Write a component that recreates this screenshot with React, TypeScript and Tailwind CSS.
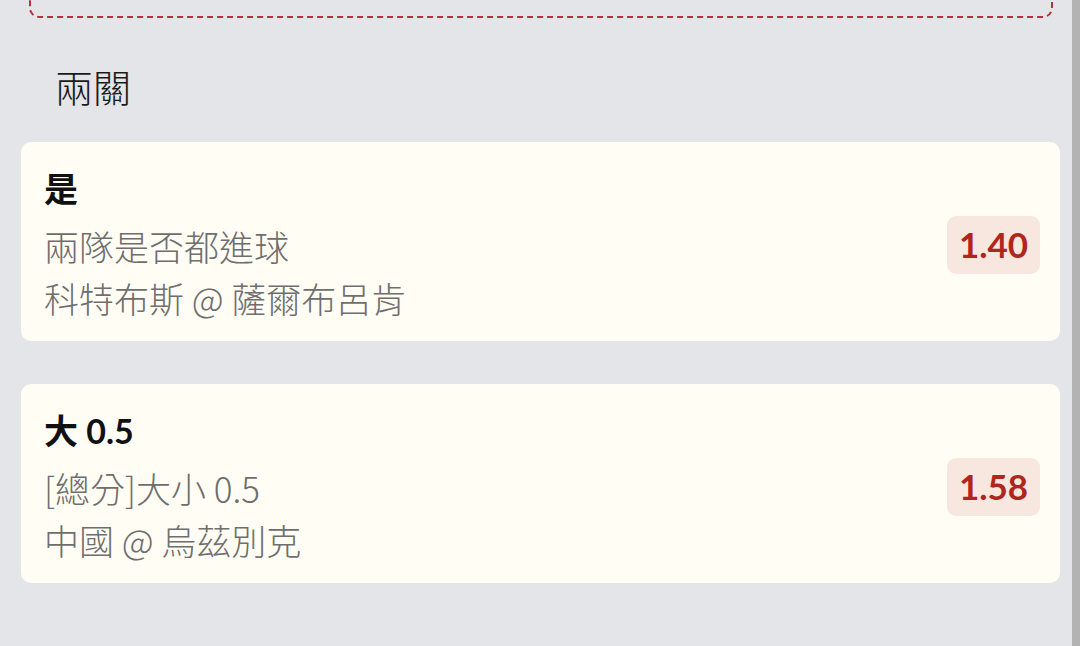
const FONT = '"Lato", "Noto Sans CJK TC", "Noto Sans", sans-serif'
const SUB_FONT = '"Noto Sans CJK TC", "Noto Sans", sans-serif'

type Leg = {
  pick: string
  market: string
  match: string
  odds: string
}

const legs: Leg[] = [
  { pick: '是', market: '兩隊是否都進球', match: '科特布斯 @ 薩爾布呂肯', odds: '1.40' },
  { pick: '大 0.5', market: '[總分]大小 0.5', match: '中國 @ 烏茲別克', odds: '1.58' },
]

function LegCard({ leg }: { leg: Leg }) {
  return (
    <div className="flex h-[199px] items-center rounded-[10px] bg-[#fffdf4] pl-[23px] pr-[20px]">
      <div className="flex flex-1 flex-col pt-[3px]">
        <p className="text-[34px] font-bold leading-[52px] text-[#111111]">{leg.pick}</p>
        <div className="mt-[5px] text-[35px] font-light leading-[52px] text-[#6e6e6e]" style={{ fontFamily: SUB_FONT }}>
          <p>{leg.market}</p>
          <p>{leg.match}</p>
        </div>
      </div>
      <div className="mt-[6px] flex h-[58px] w-[93px] items-center justify-center rounded-[9px] bg-[#f8e7df] text-[35px] font-bold text-[#b0261f]">
        {leg.odds}
      </div>
    </div>
  )
}

export default function App() {
  return (
    <div className="flex h-[646px] w-[1080px] overflow-hidden bg-[#e4e5e8]" style={{ fontFamily: FONT }}>
      <div className="flex flex-1 flex-col">
        <div className="ml-[29px] mr-[19px] mt-[-40px] h-[58px] rounded-[10px] border-2 border-dashed border-[#b3323f]" />
        <h2
          className="mt-[41px] pl-[55px] text-[38px] font-light leading-[54px] text-[#1a1a1a]"
          style={{ fontFamily: SUB_FONT }}
        >
          兩關
        </h2>
        <div className="mt-[29px] flex flex-col gap-[43px] pl-[21px] pr-[12px]">
          {legs.map((leg) => (
            <LegCard key={leg.odds} leg={leg} />
          ))}
        </div>
      </div>
      <div className="w-[8px] bg-[#b3b3b3]" />
    </div>
  )
}
